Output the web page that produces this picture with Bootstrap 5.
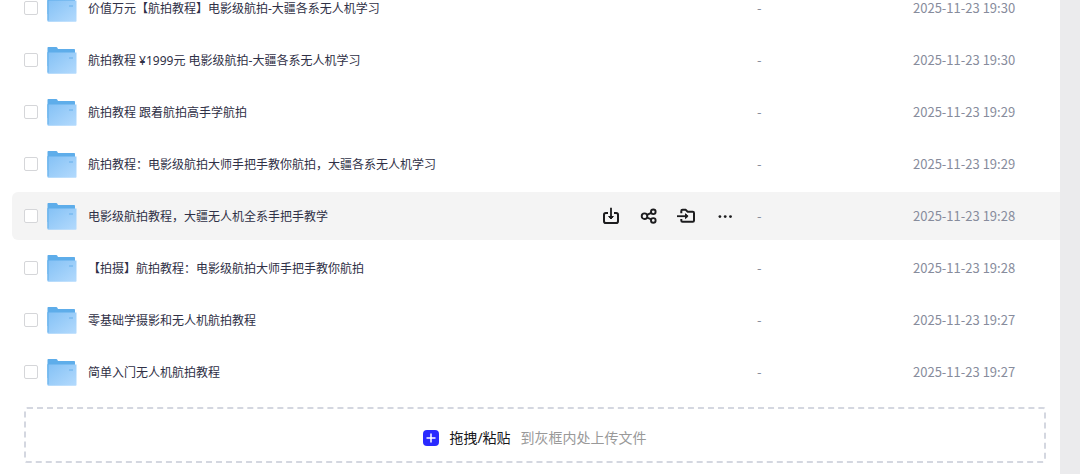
<!DOCTYPE html>
<html lang="zh-CN">
<head>
<meta charset="utf-8">
<meta name="viewport" content="width=device-width, initial-scale=1">
<title>文件列表</title>
<link href="https://cdn.jsdelivr.net/npm/bootstrap@5.3.0/dist/css/bootstrap.min.css" rel="stylesheet">
<style>
body { font-family: "Noto Sans", "Noto Sans CJK SC", sans-serif; font-size: 12px; line-height: 20px; color: #2f3046; background: #fff; overflow: hidden; }
.page-gutter { width: 20px; background: #ebebed; }
.file-pane { min-width: 0; }
.file-scroll { padding-left: 12px; }
/* the list is scrolled: its first row is partly above the window */
.file-table { margin-top: -20px; table-layout: fixed; border-collapse: separate; border-spacing: 0 4px; }
.file-table td { height: 48px; padding: 0; vertical-align: middle; }
.file-table td:first-child { padding-left: 12px; border-radius: 6px 0 0 6px; }
.file-table tr.is-active td { background: #f4f4f4; }
.file-table label { padding-top: 2px; }
.col-size { width: 156px; }
.col-date { width: 147px; }
.cell-meta { color: #878c9c; font-size: 13px; font-family: "Noto Sans CJK SC", sans-serif; }
.pick { width: 14px; height: 14px; margin: 0 9px 0 0; border: 1px solid #d5d6d9; background: #fff; flex: none; }
.form-check-input.pick[type=checkbox] { border-radius: 2px; }
.folder { width: 30px; height: 28px; margin-right: 11px; flex: none; }
.row-actions { gap: 18px; padding-right: 22px; }
.act { width: 20px; height: 20px; padding: 0; border: 0; background: none; color: #1c1c1e; display: flex; }
.drop-area { margin: 7px 14px 11px 24px; height: 56px; padding-top: 6px; border: 2px dashed #d4d7e0; border-radius: 3px; font-size: 14px; gap: 10px; }
.drop-area .add { width: 16px; height: 16px; padding: 0; border: 0; border-radius: 4px; background: #2a2aff; display: flex; }
.drop-strong { color: #18181c; }
.drop-hint { color: #999; }
</style>
</head>
<body>
<svg width="0" height="0" class="position-absolute" aria-hidden="true">
  <defs>
    <linearGradient id="folderFront" x1="0" y1="0" x2="1" y2="1">
      <stop offset="0" stop-color="#84c1f5"/><stop offset="1" stop-color="#b3dafd"/>
    </linearGradient>
    <symbol id="folder" viewBox="0 0 30 28">
      <path fill="#5eadea" d="M.5 1.800q0-.8.8-.8h8q.6 0 .9.5l.8 1.500H27.200q.8 0 .8.8V20H.5z"/>
      <path fill="url(#folderFront)" d="M1.500 6.500H29.500V26.900q0 .8-.8.8H1.300q-.8 0-.8-.8V7.500z"/>
      <path fill="#5eadea" d="M.5 6h1v20.500h-1z"/>
      <path fill="#82bff2" d="M22 11h4v2h-4z"/>
    </symbol>
  </defs>
</svg>
<div class="d-flex min-vh-100">
  <main class="file-pane flex-grow-1">
    <div class="file-scroll">
      <table class="file-table w-100">
        <colgroup><col><col class="col-size"><col class="col-date"></colgroup>
        <tbody id="files"></tbody>
      </table>
    </div>
    <section class="drop-area d-flex align-items-center justify-content-center">
      <button type="button" class="add" aria-label="添加文件"><svg width="16" height="16" viewBox="0 0 16 16" fill="none" stroke="#fff" stroke-width="1.500"><path d="M8 3.500v9M3.500 8h9"/></svg></button>
      <span class="drop-strong">拖拽/粘贴</span>
      <span class="drop-hint">到灰框内处上传文件</span>
    </section>
  </main>
  <div class="page-gutter flex-shrink-0"></div>
</div>
<template id="actions">
  <div class="row-actions d-flex ms-auto">
    <button type="button" class="act" aria-label="下载"><svg width="20" height="20" viewBox="0 0 20 20" fill="none" stroke="currentColor" stroke-width="2" stroke-linejoin="round"><path d="M7 7H4.800Q3 7 3 8.800v6.400Q3 17 4.800 17h10.400q1.800 0 1.800-1.800V8.800Q17 7 15.200 7H13"/><path stroke-width="1.800" d="M10 1.700v9"/><path fill="currentColor" stroke-width="1" d="M7.600 10.500h4.800L10 13z"/></svg></button>
    <button type="button" class="act" aria-label="分享"><svg width="20" height="20" viewBox="0 0 20 20" fill="none" stroke="currentColor" stroke-width="1.900"><circle cx="5.500" cy="10.200" r="2.800"/><circle cx="14.300" cy="5.800" r="2.300"/><circle cx="14.300" cy="14.400" r="2.300"/><path d="M8 8.900l4.200-2.100M8 11.500l4.200 1.900"/></svg></button>
    <button type="button" class="act" aria-label="移动到"><svg width="20" height="20" viewBox="0 0 20 20" fill="none" stroke="currentColor" stroke-width="2" stroke-linejoin="round"><path d="M4.300 7.300V5Q4.300 3.800 5.500 3.800h3.300l1.700 1.900h5.300q1.200 0 1.200 1.200v7.700q0 1.200-1.200 1.200H5.500q-1.200 0-1.200-1.200V13"/><path stroke-width="1.800" d="M0 10.200h9.500"/><path fill="currentColor" stroke-width="1" d="M8.500 7.800v4.800l2.600-2.400z"/></svg></button>
    <button type="button" class="act" aria-label="更多"><svg width="20" height="20" viewBox="0 0 20 20" fill="currentColor"><circle cx="4.900" cy="10.600" r="1.400"/><circle cx="10.200" cy="10.600" r="1.400"/><circle cx="15.500" cy="10.600" r="1.400"/></svg></button>
  </div>
</template>
<script>
const files = [
  ["价值万元【航拍教程】电影级航拍-大疆各系无人机学习", "19:30"],
  ["航拍教程 ¥1999元 电影级航拍-大疆各系无人机学习", "19:30"],
  ["航拍教程 跟着航拍高手学航拍", "19:29"],
  ["航拍教程：电影级航拍大师手把手教你航拍，大疆各系无人机学习", "19:29"],
  ["电影级航拍教程，大疆无人机全系手把手教学", "19:28", true],
  ["【拍摄】航拍教程：电影级航拍大师手把手教你航拍", "19:28"],
  ["零基础学摄影和无人机航拍教程", "19:27"],
  ["简单入门无人机航拍教程", "19:27"]
];
const body = document.getElementById("files");
const actions = document.getElementById("actions").innerHTML;
files.forEach(([name, time, active], i) => {
  body.insertAdjacentHTML("beforeend", `<tr class="${active ? "is-active" : ""}">
    <td><div class="d-flex align-items-center">
      <input class="form-check-input pick" type="checkbox" id="f${i}">
      <svg class="folder" aria-hidden="true"><use href="#folder"/></svg>
      <label class="text-nowrap" for="f${i}">${name}</label>${active ? actions : ""}
    </div></td>
    <td class="cell-meta">-</td>
    <td class="cell-meta">2025-11-23 ${time}</td></tr>`);
});
</script>
<script src="https://cdn.jsdelivr.net/npm/bootstrap@5.3.0/dist/js/bootstrap.bundle.min.js"></script>
</body>
</html>
